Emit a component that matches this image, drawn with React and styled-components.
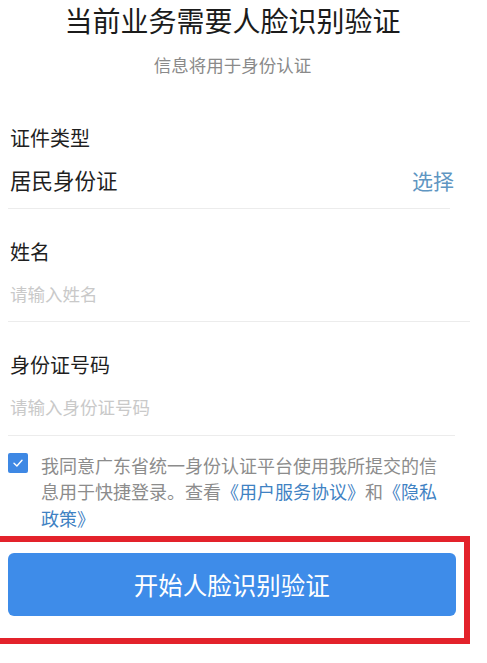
import React from 'react';
import styled, { createGlobalStyle } from 'styled-components';

const GlobalStyle = createGlobalStyle`
  html, body {
    margin: 0;
    padding: 0;
    background: #ffffff;
    overflow: hidden;
  }
  body {
    font-family: 'Noto Sans CJK SC', 'Noto Sans', sans-serif;
    -webkit-font-smoothing: antialiased;
  }
`;

const App = () => {
  return (
    <Page>
      <GlobalStyle />
      <Header>
        <Title>当前业务需要人脸识别验证</Title>
        <Subtitle>信息将用于身份认证</Subtitle>
      </Header>

      <Field $right={37}>
        <Label>证件类型</Label>
        <ValueRow>
          <Value>居民身份证</Value>
          <SelectLink>选择</SelectLink>
        </ValueRow>
      </Field>

      <Field $right={17}>
        <Label>姓名</Label>
        <ValueRow>
          <Placeholder>请输入姓名</Placeholder>
        </ValueRow>
      </Field>

      <Field $right={32}>
        <Label>身份证号码</Label>
        <ValueRow>
          <Placeholder>请输入身份证号码</Placeholder>
        </ValueRow>
      </Field>

      <Agreement>
        <CheckBox>
          <svg width="12" height="12" viewBox="0 0 12 12" fill="none">
            <path
              d="M2 6.2 L4.9 9 L10 3.2"
              stroke="#ffffff"
              strokeWidth="1.4"
              strokeLinecap="round"
              strokeLinejoin="round"
            />
          </svg>
        </CheckBox>
        <AgreementText>
          我同意广东省统一身份认证平台使用我所提交的信息用于快捷登录。查看
          <DocLink>《用户服务协议》</DocLink>和<DocLink>《隐私政策》</DocLink>
        </AgreementText>
      </Agreement>

      <Highlight>
        <StartButton>开始人脸识别验证</StartButton>
      </Highlight>
    </Page>
  );
};

const Page = styled.div`
  width: 487px;
  height: 663px;
  box-sizing: border-box;
  padding-left: 8px;
  display: flex;
  flex-direction: column;
`;

const Header = styled.div`
  width: 449px;
  display: flex;
  flex-direction: column;
  align-items: center;
  padding-bottom: 18px;
`;

const Title = styled.h1`
  margin: 0;
  font-size: 28px;
  font-weight: 400;
  line-height: 40px;
  color: #1b1b1b;
  letter-spacing: 0;
`;

const Subtitle = styled.p`
  margin: 12px 0 0;
  font-size: 17.5px;
  line-height: 25px;
  color: #8a8a8a;
`;

const Field = styled.div`
  display: flex;
  flex-direction: column;
  margin-right: ${({ $right }) => $right}px;
  padding: 29px 0 13.5px 2px;
  border-bottom: 1px solid #ececec;
`;

const Label = styled.div`
  font-size: 20px;
  line-height: 28px;
  color: #1f1f1f;
`;

const ValueRow = styled.div`
  display: flex;
  justify-content: space-between;
  align-items: center;
  margin-top: 14px;
  height: 28px;
`;

const Value = styled.span`
  font-size: 21.5px;
  line-height: 28px;
  color: #1f1f1f;
`;

const SelectLink = styled.span`
  font-size: 21px;
  line-height: 28px;
  color: #5f96c2;
  margin-right: -4px;
`;

const Placeholder = styled.span`
  font-size: 17.5px;
  line-height: 28px;
  color: #c9c9c9;
`;

const Agreement = styled.div`
  display: flex;
  align-items: flex-start;
  margin-top: 16px;
  width: 440px;
`;

const CheckBox = styled.span`
  flex: none;
  width: 20px;
  height: 20px;
  margin-top: 1px;
  border-radius: 2px;
  background: #3e88e4;
  display: flex;
  align-items: center;
  justify-content: center;
`;

const AgreementText = styled.p`
  margin: 0 0 0 13px;
  font-size: 18px;
  line-height: 26.5px;
  color: #8c8c8c;
`;

const DocLink = styled.span`
  color: #3f82c3;
`;

const Highlight = styled.div`
  margin: 5px 0 0 -14px;
  width: 476px;
  box-sizing: border-box;
  border: 6.5px solid #e3222b;
  padding: 11px 8px 22px 7.5px;
`;

const StartButton = styled.button`
  display: block;
  width: 100%;
  height: 63px;
  border: none;
  border-radius: 6px;
  background: #3e8ce9;
  color: #ffffff;
  font-family: 'Noto Sans CJK SC', 'Noto Sans', sans-serif;
  font-size: 24.5px;
  padding: 0;
  cursor: pointer;
`;

export default App;
